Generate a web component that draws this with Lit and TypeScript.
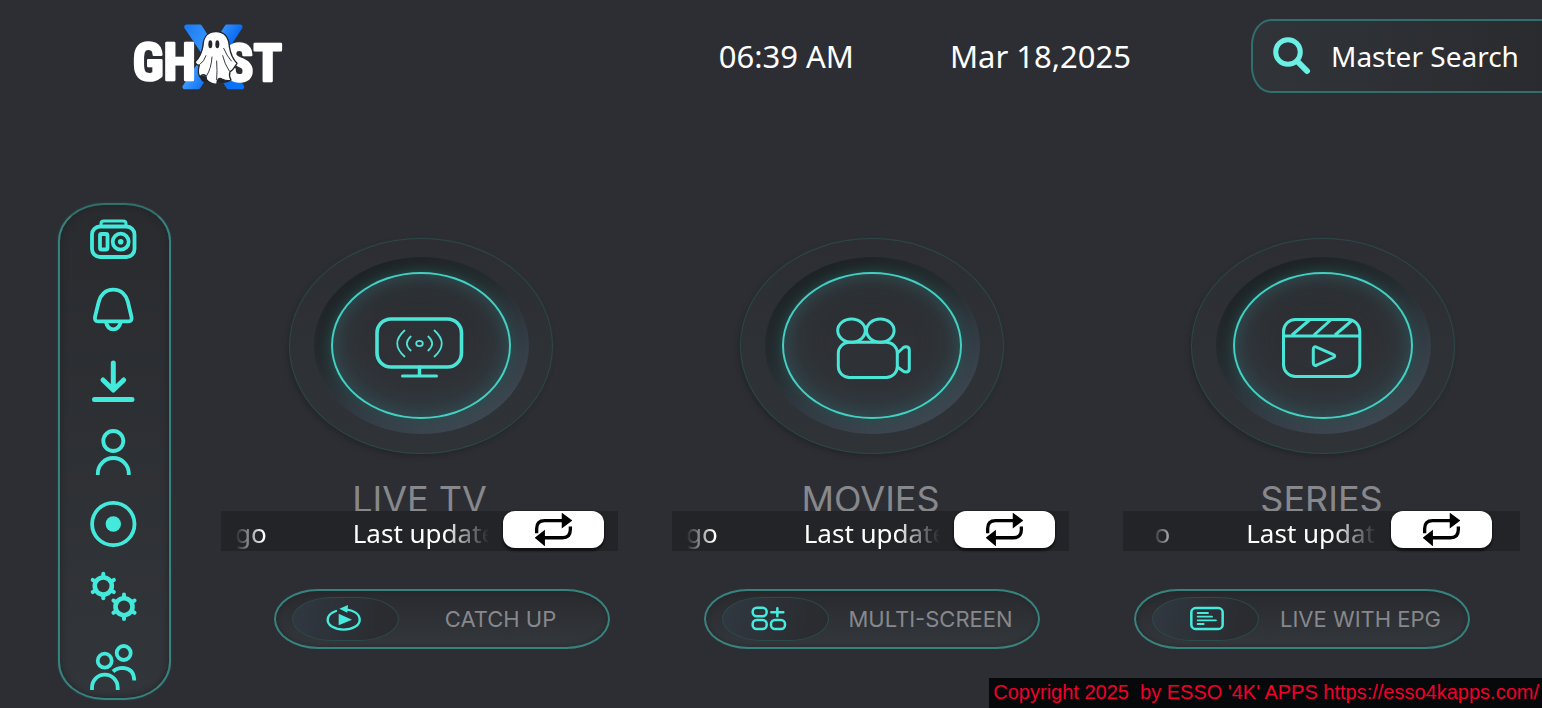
import { LitElement, html, svg, css, type TemplateResult } from "lit";
import { customElement, property } from "lit/decorators.js";

const gear = (cx: number, cy: number) => svg`
  <circle cx=${cx} cy=${cy} r="8.5" stroke-width="4.6" />
  ${[30, 90, 150, 210, 270, 330].map((deg) => {
    const c = Math.cos((deg * Math.PI) / 180);
    const s = Math.sin((deg * Math.PI) / 180);
    return svg`<path stroke-width="4" d="M${cx + c * 9} ${cy + s * 9}L${cx + c * 12.2} ${cy + s * 12.2}" />`;
  })}`;

const menu = [
  {
    label: "Radio",
    icon: svg`<rect x="3" y="11" width="42.5" height="30.5" rx="8" />
      <path d="M12 11V8Q12 5.5 15 5.5H34Q37 5.5 37 8V11" stroke-width="3" />
      <rect x="11" y="18.5" width="7.5" height="15.5" rx="1.5" />
      <circle cx="31.7" cy="26.2" r="8" /><circle cx="31.7" cy="26.2" r="2.8" fill="currentColor" stroke="none" />`,
  },
  {
    label: "Notifications",
    icon: svg`<path d="M24.3 4.2C16 4.2 11.2 10 9.8 16L6 31.5Q5.3 35.8 9 35.8H39.5Q43.3 35.8 42.5 31.5L38.8 16C37.4 10 32.5 4.2 24.3 4.2Z" />
      <path d="M17 36.5Q18.5 43.8 24.3 43.8Q30 43.8 31.7 36.5" />`,
  },
  {
    label: "Downloads",
    icon: svg`<path stroke-width="5" d="M24.3 6.5V33M14 23.5L24.3 33.5L34.7 23.5M5.5 43H43" />`,
  },
  {
    label: "Account",
    icon: svg`<circle cx="24.3" cy="13.5" r="10" /><path stroke-linecap="butt" d="M8.8 47.5V46A15.5 15.5 0 0 1 39.8 46V47.5" />`,
  },
  {
    label: "Recordings",
    icon: svg`<circle cx="24.3" cy="25.5" r="21.2" /><circle cx="24.3" cy="25.5" r="7.7" fill="currentColor" stroke="none" />`,
  },
  { label: "Settings", icon: svg`${gear(14.3, 16.5)}${gear(35, 37.2)}` },
  {
    label: "Users",
    icon: svg`<circle cx="15.7" cy="21.2" r="7" /><circle cx="34.7" cy="13.5" r="7" />
      <path stroke-linecap="butt" d="M3 50.5V48A12.8 12.8 0 0 1 28.7 48V50.5" />
      <path stroke-linecap="butt" d="M24 32Q28 28.3 34 28.3Q45 29 45.3 41" />`,
  },
];

const tiles = [
  {
    title: "LIVE TV",
    tail: "go",
    narrow: false,
    icon: svg`<rect x="44" y="45" width="84.5" height="48" rx="14" stroke-width="3.6" />
      <path stroke-width="3.5" d="M86.5 93V101" /><path stroke-width="3" d="M69.5 102H103.5" />
      <ellipse cx="86.5" cy="69.5" rx="3.3" ry="2.6" stroke-width="1.8" />
      <path stroke-width="1.8" d="M71.5 56.5Q57 69.5 71.5 82.5M77.7 62.5Q70 69.5 77.7 76.5M101.5 56.5Q116 69.5 101.5 82.5M95.3 62.5Q103 69.5 95.3 76.5" />`,
  },
  {
    title: "MOVIES",
    tail: "go",
    narrow: false,
    icon: svg`<ellipse cx="67.5" cy="56.6" rx="13.8" ry="11.6" /><ellipse cx="96.3" cy="56.6" rx="13.8" ry="11.6" />
      <rect x="54.3" y="68.3" width="59" height="35.2" rx="11" />
      <path d="M113.5 79L119.5 73.5Q120.5 72.7 122 72.7Q125.3 72.7 125.3 76V94.5Q125.3 98 122 98Q120.5 98 119 97L113.5 93" />`,
  },
  {
    title: "SERIES",
    tail: "o",
    narrow: true,
    icon: svg`<rect x="48.5" y="45.5" width="76.3" height="57" rx="12" />
      <path stroke-linecap="butt" d="M48.5 62H124.8M57 61L74.5 46M79 61L95.7 46M100 61L117 46.5" />
      <path d="M78.3 75.5Q78.3 71.5 82 73.3L98.5 80.6Q101 82 98.5 83.5L82 91Q78.3 92.5 78.3 88.5Z" />`,
  },
];

const shortcuts = [
  {
    label: "CATCH UP",
    box: "354 405 108 84",
    icon: svg`<path stroke-width="7" d="M378 423Q353 431 353 450C353 466 374 479 401 479S449 466 449 450C449 434 434 421 404 418" />
      <path d="M388 416L414 405L412 428Z" fill="currentColor" stroke="none" />
      <path d="M386 431L426 449L386 466Z" fill="currentColor" stroke="none" />`,
  },
  {
    label: "MULTI-SCREEN",
    box: "297 405 108 84",
    icon: svg`<g stroke-width="7.5"><rect x="281" y="413" width="42" height="26" rx="12" />
      <rect x="281" y="450" width="42" height="27" rx="12" /><rect x="336" y="450" width="42" height="27" rx="12" />
      <path d="M337 427H373M355 415V439" /></g>`,
  },
  {
    label: "LIVE WITH EPG",
    box: "234 405 108 84",
    icon: svg`<rect x="244" y="414" width="94" height="63" rx="13" stroke-width="7.5" />
      <path stroke-width="5.5" d="M263 429H294M263 440H306M263 451H318M263 462H281" />`,
  },
];

@customElement("ghost-logo")
export class GhostLogo extends LitElement {
  static styles = css`
    :host { display: block; line-height: 0; }
    .mark { width: 148px; height: 66px; overflow: visible; }
    .word { font: 700 158px "Liberation Sans Narrow", "Roboto Condensed", Roboto, sans-serif; fill: #fff; stroke: #fff; stroke-width: 8; stroke-linejoin: round; }
    .cross { font: 700 264px "Liberation Sans", sans-serif; fill: url(#blue); stroke: url(#blue); stroke-width: 14; stroke-linejoin: round; }
  `;
  render() {
    return html`<svg class="mark" viewBox="42 36 444 198" role="img" aria-label="Ghost X">
      <defs><linearGradient id="blue" x1="0" y1="0" x2="1" y2="1"><stop offset="0" stop-color="#0f6ff0" /><stop offset=".4" stop-color="#3a97ff" /><stop offset=".6" stop-color="#0a6cf0" /><stop offset="1" stop-color="#0876ff" /></linearGradient></defs>
      <text class="cross" x="280" y="227" text-anchor="middle">X</text>
      <text class="word" x="38" y="207">GH</text>
      <text class="word" x="486" y="211" text-anchor="end">ST</text>
      <path d="M238 195Q262 190 262 212Q246 220 238 195ZM290 212Q300 190 332 208Q320 222 290 212Z" fill="#22242b" />
      <path d="M288 62C262 62 250 80 249 104C246 126 236 142 225 153C228 160 234 163 238 162C234 176 234 188 239 197C250 187 260 190 259 205C266 215 280 221 291 219C290 205 297 199 306 204C316 209 326 211 333 207C328 198 328 188 330 182C337 180 345 167 351 157C340 146 331 126 328 106C326 80 314 62 288 62Z" fill="#fff" stroke="#24262c" stroke-width="4" stroke-linejoin="round" />
      <ellipse cx="271" cy="100" rx="6" ry="12" fill="#24262c" /><ellipse cx="292" cy="100" rx="6" ry="12" fill="#24262c" />
      <path d="M258 134Q252 152 240 160M276 138Q274 172 260 194M290 150Q292 180 290 206M308 134Q314 160 328 180M311 112Q320 134 334 150" fill="none" stroke="#3a3c44" stroke-width="3" stroke-linecap="round" />
    </svg>`;
  }
}

@customElement("side-menu")
export class SideMenu extends LitElement {
  static styles = css`
    :host { display: block; }
    .rail { box-sizing: border-box; width: 113px; display: flex; flex-direction: column; border: 2px solid #37827e; border-top-color: #33706d; border-radius: 46px / 38px; background: linear-gradient(#292b2f, #323539); box-shadow: inset 0 0 6px #1f2327, 0 0 2px #28504f; }
    .item { height: 71px; margin: 0; padding: 0; border: 0; background: none; color: #43eadb; display: grid; place-items: center; cursor: pointer; }
    .item:first-child, .item:last-child { height: 69px; }
    .icon { width: 48px; height: 48px; overflow: visible; fill: none; stroke: currentColor; stroke-width: 3.8; stroke-linecap: round; stroke-linejoin: round; }
  `;
  render() {
    return html`<nav class="rail" aria-label="Main menu">
      ${menu.map((m) => html`<button class="item" aria-label=${m.label}><svg class="icon" viewBox="2 0.5 48 48">${m.icon}</svg></button>`)}
    </nav>`;
  }
}

@customElement("media-tile")
export class MediaTile extends LitElement {
  @property({ attribute: false }) heading = "";
  @property({ attribute: false }) tail = "";
  @property({ type: Boolean }) narrow = false;
  @property({ attribute: false }) icon?: TemplateResult | unknown;

  static styles = css`
    :host { display: block; }
    .tile { display: flex; flex-direction: column; align-items: center; }
    .dial { box-sizing: border-box; width: 264px; height: 216px; margin: 0 0 0 3px; padding: 18px 23px 19px 24px; border: 1px solid #2c484a; border-radius: 50%; background: linear-gradient(#2c2e33, #2f3338); box-shadow: -2px 3px 4px #25272b, 0 0 2px #2b3f42; cursor: pointer; }
    .well { box-sizing: border-box; display: block; width: 215px; height: 177px; padding: 15px 18px 15px 17px; border-radius: 50%; background: linear-gradient(155deg, #1e2326 12%, #252c30 38%, #333c44 64%, #3e4852 88%); }
    .face { box-sizing: border-box; display: block; width: 180px; height: 147px; border: 2px solid #43cfc3; border-radius: 50%; background: linear-gradient(#2c2e32, #303338); box-shadow: 0 0 12px #24534f, inset 0 0 14px #2c4e50, inset 0 -4px 34px #34464d; }
    .glyph { display: block; width: 176px; height: 143px; fill: none; stroke: #4be5d8; stroke-width: 3; stroke-linecap: round; stroke-linejoin: round; }
    .title { align-self: stretch; height: 32px; margin: 0; padding-top: 25px; overflow: hidden; text-align: center; color: #87888c; font: 400 36px/40px Inter, sans-serif; }
    .bar { align-self: stretch; height: 40px; display: flex; justify-content: center; gap: 14px; background: #232428; }
    .ticker { width: 254px; height: 40px; display: flex; gap: 86px; overflow: hidden; white-space: nowrap; color: #fff; font: 400 26px/44px "Noto Sans", sans-serif; mask-image: linear-gradient(90deg, transparent, #000 28px, #000 calc(100% - 44px), transparent); }
    .ticker.narrow { width: 225px; gap: 76px; padding-left: 3px; box-sizing: border-box; }
    .refresh { width: 101px; height: 37px; margin: 0; padding: 0; border: 0; border-radius: 12px; background: #fff; box-shadow: 0 3px 2px #111214, 0 0 2px #111214; display: grid; place-items: center; cursor: pointer; }
    .swap { width: 37px; height: 33px; fill: none; stroke: #000; stroke-width: 10; }
  `;
  render() {
    return html`<section class="tile">
      <button class="dial" aria-label=${this.heading}>
        <span class="well"><span class="face"><svg class="glyph" viewBox="0 0 176 143">${this.icon}</svg></span></span>
      </button>
      <h2 class="title">${this.heading}</h2>
      <div class="bar">
        <div class="ticker ${this.narrow ? "narrow" : ""}"><span>${this.tail}</span><span>Last update</span></div>
        <button class="refresh" aria-label="Refresh">
          <svg class="swap" viewBox="975 135 112 100">
            <path d="M980 196V182Q980 158 1004 158H1058M1082 176V186Q1082 210 1058 210H1003" />
            <path d="M1056 134L1088 158L1056 182ZM1005 186L974 210L1005 236Z" fill="#000" stroke="none" />
          </svg>
        </button>
      </div>
    </section>`;
  }
}

@customElement("app-root")
export class AppRoot extends LitElement {
  static styles = css`
    :host { display: block; }
    .screen { position: relative; min-height: 100vh; overflow: hidden; background: #2d2e33; color: #fff; font-family: "Noto Sans", sans-serif; box-sizing: border-box; }
    .top { display: flex; align-items: center; padding: 19px 0 0 134px; }
    .clock { display: flex; gap: 96px; margin: 0 120px 0 auto; font-size: 31px; line-height: 44px; }
    .search { box-sizing: border-box; width: 291px; height: 74px; margin: 0; padding: 0 0 0 20px; display: flex; align-items: center; gap: 20px; border: 2px solid #316f6c; border-right: 0; border-radius: 20px 0 0 20px / 26px 0 0 26px; background: linear-gradient(90deg, #303439, #2a2b2f); color: #fff; font: 400 28px/40px "Noto Sans", sans-serif; white-space: nowrap; cursor: pointer; }
    .lens { flex: none; width: 38px; height: 38px; fill: none; stroke: #6cf0e6; stroke-linecap: round; }
    .body { display: flex; gap: 50px; padding: 110px 22px 0 58px; }
    .content { flex: 1; min-width: 0; padding-top: 35px; }
    .tiles { display: grid; grid-template-columns: repeat(3, 1fr); gap: 54px; }
    .shortcuts { display: grid; grid-template-columns: repeat(3, 1fr); gap: 94px; padding: 38px 50px 0 53px; }
    .pill { box-sizing: border-box; height: 60px; margin: 0; padding: 0 6px 0 16px; display: flex; align-items: center; border: 2px solid #38827e; border-radius: 44px / 30px; background: linear-gradient(#292a2e, #33373c); box-shadow: inset 0 0 4px #22262a; color: #87888c; font: 400 22px/28px Inter, sans-serif; cursor: pointer; }
    .knob { box-sizing: border-box; flex: none; width: 107px; height: 44px; display: grid; place-items: center; border: 1px solid #2c4a4b; border-radius: 40px / 22px; background: linear-gradient(100deg, #313841, #2a2c30 80%); color: #45ecdd; }
    .small { width: 36px; height: 28px; overflow: visible; fill: none; stroke: currentColor; stroke-linecap: round; }
    .text { flex: 1; text-align: center; white-space: nowrap; }
    .notice { position: absolute; right: 0; bottom: 0; padding: 2px 3px 3px 4px; background: #07080a; color: #f0002c; font: 400 20px/25px "Liberation Sans", sans-serif; white-space: pre; }
    .link { color: inherit; text-decoration: none; }
  `;
  render() {
    return html`<div class="screen">
      <header class="top">
        <ghost-logo></ghost-logo>
        <div class="clock"><time>06:39 AM</time><time datetime="2025-03-18">Mar 18,2025</time></div>
        <button class="search">
          <svg class="lens" viewBox="0 0 38 38"><circle cx="15" cy="15" r="12.3" stroke-width="5" /><path d="M25 25L34 34" stroke-width="6" /></svg>
          <span>Master Search</span>
        </button>
      </header>
      <main class="body">
        <side-menu></side-menu>
        <div class="content">
          <div class="tiles">
            ${tiles.map((t) => html`<media-tile .heading=${t.title} .tail=${t.tail} .icon=${t.icon} ?narrow=${t.narrow}></media-tile>`)}
          </div>
          <div class="shortcuts">
            ${shortcuts.map((s) => html`<button class="pill">
              <span class="knob"><svg class="small" viewBox=${s.box}>${s.icon}</svg></span>
              <span class="text">${s.label}</span>
            </button>`)}
          </div>
        </div>
      </main>
      <footer class="notice">Copyright 2025  by ESSO '4K' APPS <a class="link" href="https://esso4kapps.com/">https://esso4kapps.com/</a></footer>
    </div>`;
  }
}
